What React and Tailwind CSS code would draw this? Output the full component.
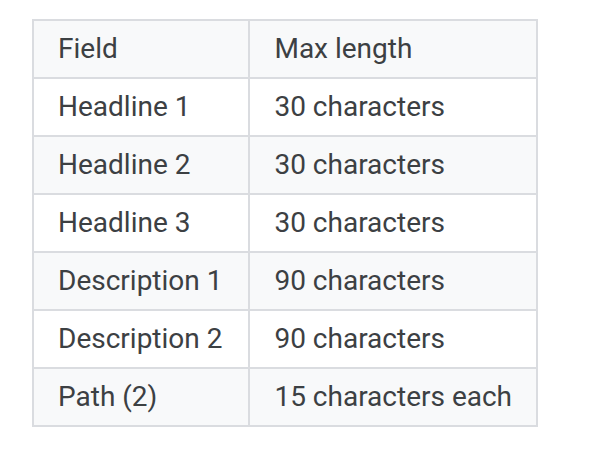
const rows = [
  ["Headline 1", "30 characters"],
  ["Headline 2", "30 characters"],
  ["Headline 3", "30 characters"],
  ["Description 1", "90 characters"],
  ["Description 2", "90 characters"],
  ["Path (2)", "15 characters each"],
];

export default function App() {
  return (
    <div className="min-h-screen bg-white pl-8 pt-[19px]" style={{ fontFamily: "Roboto, sans-serif" }}>
      <table className="border-collapse border-2 border-[#dadce0] text-[28px] text-[#3c4043]">
        <thead>
          <tr className="bg-[#f8f9fa]">
            <th className="border-2 border-[#dadce0] pl-6 pr-[26px] text-left font-normal leading-[56px]">Field</th>
            <th className="border-2 border-[#dadce0] px-6 text-left font-normal leading-[56px]">Max length</th>
          </tr>
        </thead>
        <tbody>
          {rows.map((r, i) => (
            <tr key={i} className={i % 2 === 1 ? "bg-[#f8f9fa]" : "bg-white"}>
              <td className="border-2 border-[#dadce0] pl-6 pr-[26px] leading-[56px]">{r[0]}</td>
              <td className="border-2 border-[#dadce0] px-6 leading-[56px]">{r[1]}</td>
            </tr>
          ))}
        </tbody>
      </table>
    </div>
  );
}
